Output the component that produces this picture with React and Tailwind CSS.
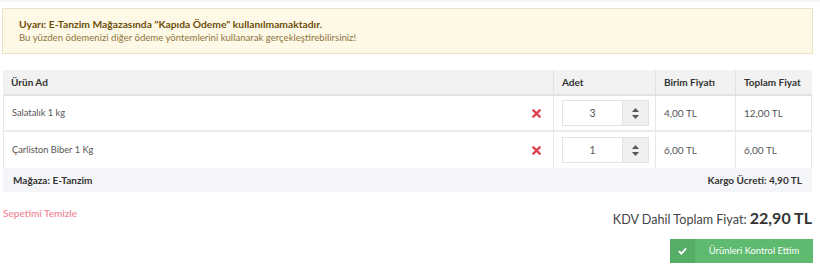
import React, { useState } from 'react';

const items = [
  { name: 'Salatalık 1 kg', qty: 3, unit: '4,00 TL', total: '12,00 TL' },
  { name: 'Çarliston Biber 1 Kg', qty: 1, unit: '6,00 TL', total: '6,00 TL' },
];

function QtyInput({ value }) {
  const [qty, setQty] = useState(value);
  return (
    <div className="flex h-[26px] w-[87px]">
      <input
        value={qty}
        onChange={e => setQty(e.target.value)}
        className="w-[61px] h-full border border-[#e3e3e3] text-center text-[10.5px] text-[#555] outline-none"
      />
      <div className="w-[26px] h-full border border-l-0 border-[#e3e3e3] bg-[#efefef] flex flex-col items-center justify-center gap-[3px]">
        <svg width="7" height="4" viewBox="0 0 7 4"><path d="M0 4 L3.5 0 L7 4 Z" fill="#555" /></svg>
        <svg width="7" height="4" viewBox="0 0 7 4"><path d="M0 0 L3.5 4 L7 0 Z" fill="#555" /></svg>
      </div>
    </div>
  );
}

export default function App() {
  return (
    <div className="w-[820px] h-[279px] bg-white font-['Lato',sans-serif] text-[#444] border-t-2 border-[#f5f6f9] relative">
      {/* alert */}
      <div className="mx-[2px] mt-[6px] w-[811px] h-[46px] bg-[#fef9e6] border border-[#ebe1c6] pl-[16px] pt-[8px]">
        <div className="text-[10.3px] font-bold text-[#6e4f0c] leading-[15px]">
          Uyarı: E-Tanzim Mağazasında "Kapıda Ödeme" kullanılmamaktadır.
        </div>
        <div className="text-[9.6px] text-[#8d7440] leading-[12px]">
          Bu yüzden ödemenizi diğer ödeme yöntemlerini kullanarak gerçekleştirebilirsiniz!
        </div>
      </div>

      {/* table */}
      <div className="ml-[3px] mt-[16px] w-[809px] text-[10px]">
        <div className="flex h-[26px] bg-[#f2f2f2] border-b-2 border-[#e2e2e2] font-bold text-[#333]">
          <div className="w-[550px] pl-[8px] flex items-center">Ürün Ad</div>
          <div className="w-[102px] pl-[8px] flex items-center border-l border-[#e2e2e2]">Adet</div>
          <div className="w-[80px] pl-[8px] flex items-center border-l border-[#e2e2e2]">Birim Fiyatı</div>
          <div className="flex-1 pl-[8px] flex items-center border-l border-[#e2e2e2]">Toplam Fiyat</div>
        </div>
        {items.map((it, i) => (
          <div key={i} className={`flex h-[36px] ${i === 0 ? 'border-b-2 border-[#ebebeb]' : ''}`}>
            <div className="w-[550px] pl-[8px] pr-[12px] flex items-center justify-between border-l border-[#e8e8e8] text-[#555] text-[9.3px]">
              <span>{it.name}</span>
              <svg width="9" height="9" viewBox="0 0 10 10">
                <path d="M1.5 1.5 L8.5 8.5 M8.5 1.5 L1.5 8.5" stroke="#e0404f" strokeWidth="2.6" strokeLinecap="round" />
              </svg>
            </div>
            <div className="w-[102px] pl-[8px] flex items-center border-l border-[#e8e8e8]">
              <QtyInput value={it.qty} />
            </div>
            <div className="w-[80px] pl-[8px] flex items-center border-l border-[#e8e8e8] text-[#555]">{it.unit}</div>
            <div className="flex-1 pl-[8px] flex items-center border-l border-r border-[#e8e8e8] text-[#555]">{it.total}</div>
          </div>
        ))}
        <div className="flex h-[24px] bg-[#f4f5f9] items-center justify-between px-[10px] font-bold text-[#333]">
          <span>Mağaza: E-Tanzim</span>
          <span>Kargo Ücreti: 4,90 TL</span>
        </div>
      </div>

      {/* bottom */}
      <div className="flex justify-between w-[813px] mt-[14px]">
        <button className="ml-[3px] self-start text-[10px] font-semibold text-[#f28a99]">Sepetimi Temizle</button>
        <div className="flex flex-col items-end pt-[2px]">
          <div className="text-[#444] text-[12.6px] leading-[20px] pr-[1px]">
            KDV Dahil Toplam Fiyat: <span className="text-[16px] font-bold text-[#333]">22,90 TL</span>
          </div>
          <button className="mt-[9px] flex h-[24px] w-[143px] bg-[#5dba6f] text-white text-[9.4px]">
            <span className="w-[25px] h-full bg-[#55ad66] flex items-center justify-center">
              <svg width="9" height="8" viewBox="0 0 10 8">
                <path d="M1 4.2 L3.8 7 L9 1" stroke="white" strokeWidth="2" fill="none" />
              </svg>
            </span>
            <span className="flex-1 h-full flex items-center justify-center">Ürünleri Kontrol Ettim</span>
          </button>
        </div>
      </div>
    </div>
  );
}
